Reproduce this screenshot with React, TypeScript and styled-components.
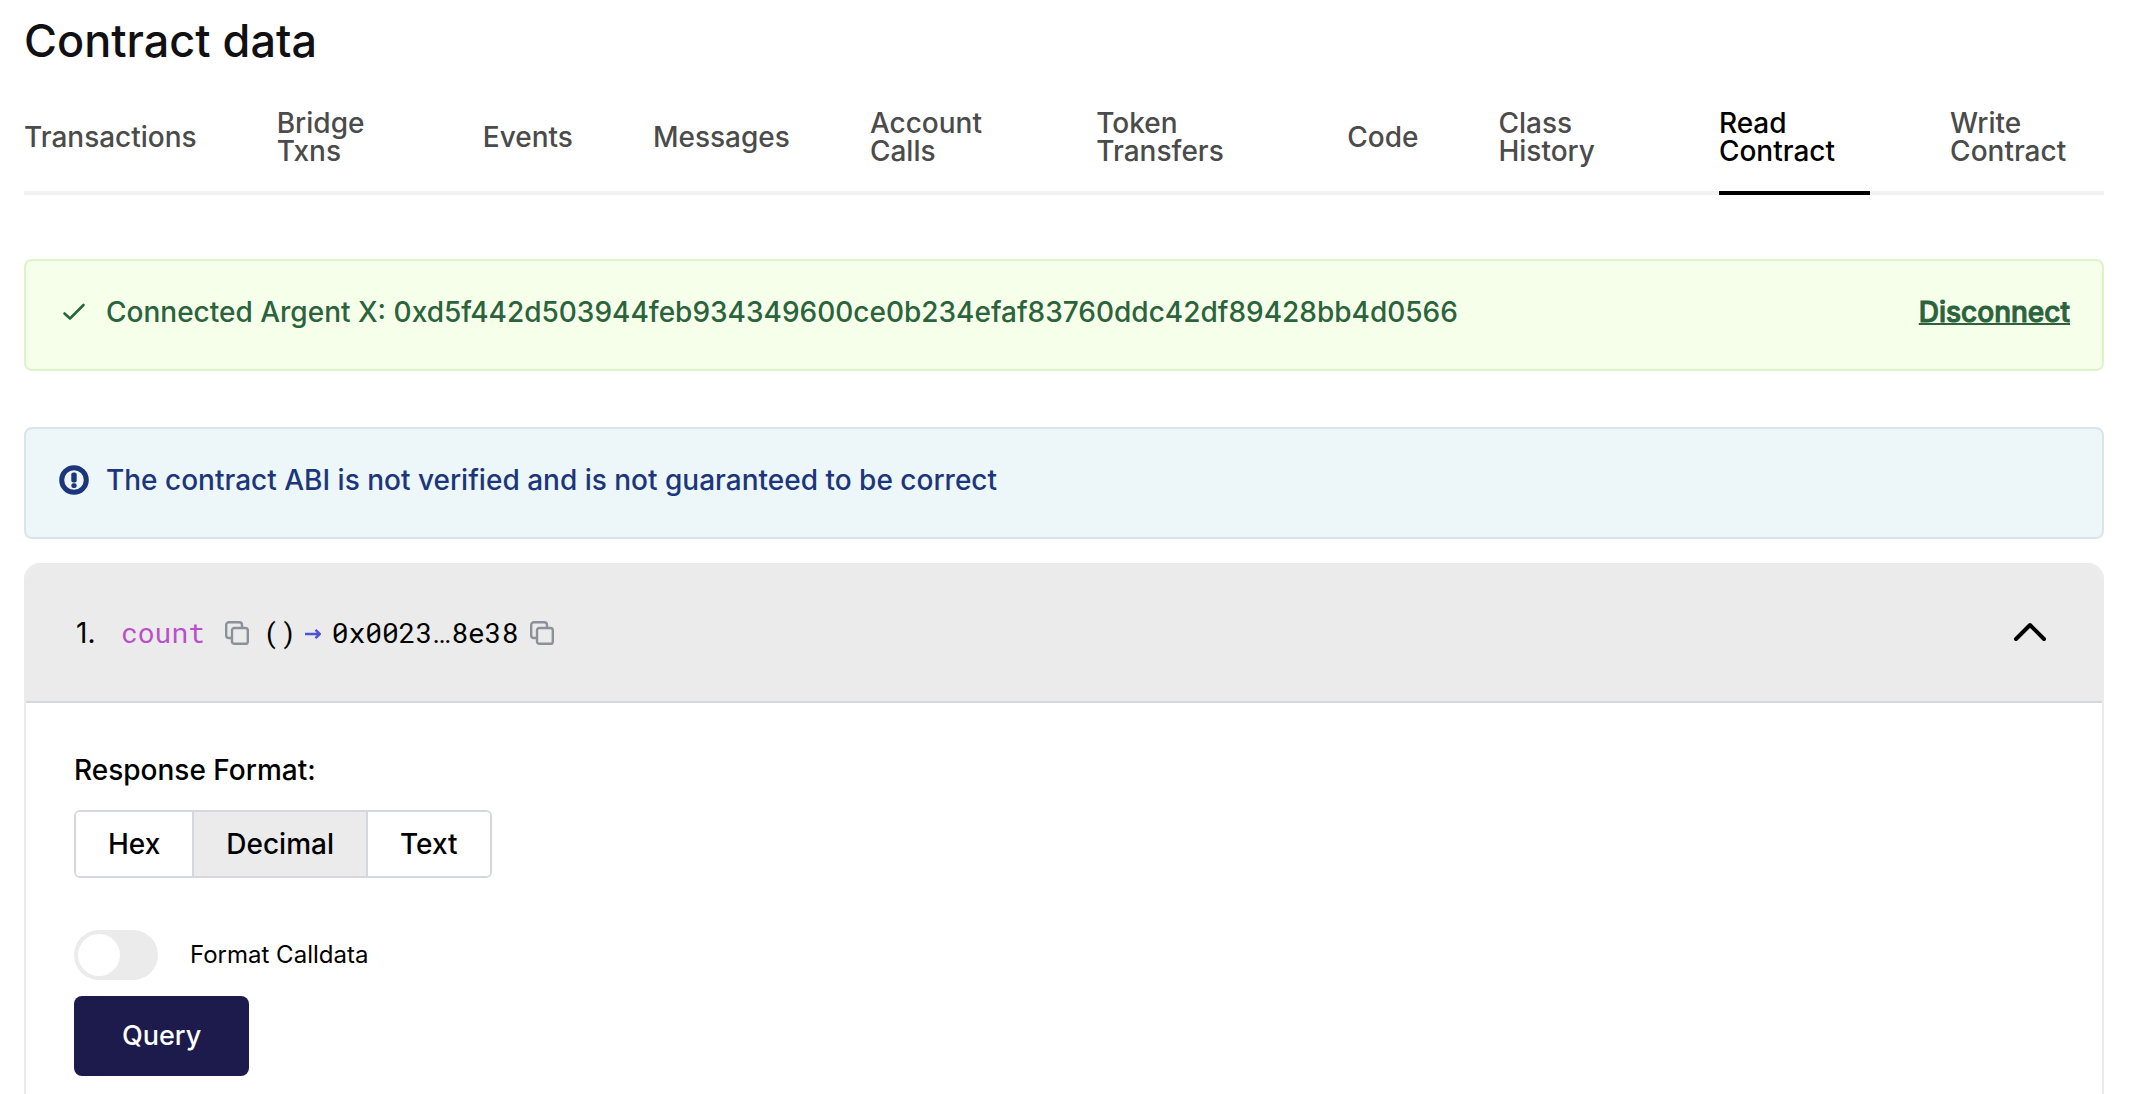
import React, { useState } from "react";
import styled, { createGlobalStyle } from "styled-components";

const GlobalStyle = createGlobalStyle`
  *, *::before, *::after { box-sizing: border-box; }
  body {
    margin: 0;
    background: #ffffff;
    color: #000000;
    font-family: Inter, "Liberation Sans", sans-serif;
    font-size: 28px;
    font-weight: 500;
    line-height: 40px;
  }
  button { font: inherit; color: inherit; cursor: pointer; }
`;

const Page = styled.main`
  display: flex;
  flex-direction: column;
  min-height: 100vh;
  padding: 16px 26px 0 24px;
`;

const Title = styled.h1`
  margin: 0;
  color: #111113;
  font-size: 45px;
  font-weight: 500;
  line-height: 50px;
`;

const Tabs = styled.div`
  display: flex;
  gap: 80px;
  margin-top: 43px;
  box-shadow: inset 0 -4px 0 #f2f2f2;
`;

const Tab = styled.button<{ $active: boolean }>`
  padding: 0 0 26px;
  border: 0;
  border-bottom: 4px solid ${(p) => (p.$active ? "#000000" : "transparent")};
  background: none;
  color: ${(p) => (p.$active ? "#000000" : "#4b4b4b")};
  line-height: 28px;
  text-align: left;
`;

const Notice = styled.section<{ $tone: "success" | "info" }>`
  display: flex;
  align-items: flex-start;
  gap: 16px;
  height: 112px;
  margin-top: ${(p) => (p.$tone === "success" ? "64px" : "56px")};
  padding: 32px;
  border: 2px solid ${(p) => (p.$tone === "success" ? "#dff3c8" : "#d9e6e8")};
  border-radius: 8px;
  background: ${(p) => (p.$tone === "success" ? "#f6ffe9" : "#edf6f8")};
  color: ${(p) => (p.$tone === "success" ? "#2a633c" : "#1b367c")};
  line-height: 38px;

  > svg { flex: none; margin-top: 4px; }
  p { flex: 1; margin: 0; }
`;

const Disconnect = styled.button`
  padding: 0;
  border: 0;
  background: none;
  text-decoration: underline;
  text-decoration-thickness: 2px;
  -webkit-text-stroke: 1px currentColor;
`;

const Panel = styled.section`
  flex: 1;
  margin-top: 24px;
  border: 2px solid #ebebeb;
  border-bottom: 0;
  border-radius: 16px 16px 0 0;
`;

const PanelHeader = styled.header`
  display: flex;
  align-items: center;
  justify-content: space-between;
  height: 138px;
  padding: 0 54px 0 50px;
  border-bottom: 2px solid #d4d8de;
  border-radius: 14px 14px 0 0;
  background: #ebebeb;
`;

const Signature = styled.div`
  display: flex;
  align-items: center;
  font-family: "Roboto Mono", "DejaVu Sans Mono", monospace;
  font-weight: 400;
`;

const Index = styled.span`
  width: 45px;
  font-family: Inter, sans-serif;
`;

const FunctionName = styled.span`
  margin-right: 20px;
  color: #b94fc9;
`;

const Params = styled.span`
  margin: 0 8px 0 14px;
`;

const Arrow = styled.span`
  display: flex;
  margin-right: 11px;
`;

const Value = styled.span`
  margin-right: 12px;
`;

const Ellipsis = styled.span`
  font-family: Roboto, sans-serif;
`;

const IconButton = styled.button`
  display: flex;
  padding: 0;
  border: 0;
  background: none;
`;

const PanelBody = styled.div`
  display: flex;
  flex-direction: column;
  align-items: flex-start;
  padding: 47px 48px 18px;
`;

const Segments = styled.div`
  display: flex;
  margin-top: 20px;
  border: 2px solid #d4d8de;
  border-radius: 6px;
  overflow: hidden;
`;

const Segment = styled.button<{ $active: boolean }>`
  padding: 12px 32px;
  border: 0;
  background: ${(p) => (p.$active ? "#ebebeb" : "#ffffff")};

  & + & { border-left: 2px solid #d4d8de; }
`;

const SwitchRow = styled.label`
  display: flex;
  align-items: center;
  gap: 32px;
  margin-top: 52px;
  font-size: 24px;
  font-weight: 400;
  cursor: pointer;
`;

const Switch = styled.input`
  appearance: none;
  display: flex;
  width: 84px;
  height: 50px;
  margin: 0;
  padding: 4px;
  border-radius: 25px;
  background: #ebebeb;
  cursor: pointer;

  &::before {
    content: "";
    width: 42px;
    height: 42px;
    border-radius: 50%;
    background: #ffffff;
  }
  &:checked { justify-content: flex-end; background: #1c1b4b; }
`;

const QueryButton = styled.button`
  height: 80px;
  margin-top: 16px;
  padding: 0 48px;
  border: 0;
  border-radius: 8px;
  background: #1c1b4b;
  color: #ffffff;
  font-size: 27px;
`;

const CheckIcon = () => (
  <svg width="32" height="30" viewBox="0 0 32 30" fill="none" aria-hidden="true">
    <path d="M6.500 16.500L12 21.500L25.500 8" stroke="currentColor" strokeWidth="2.600" strokeLinecap="round" strokeLinejoin="round" />
  </svg>
);

const AlertIcon = () => (
  <svg width="32" height="30" viewBox="0 0 32 30" fill="none" aria-hidden="true">
    <circle cx="16" cy="15" r="12.300" stroke="currentColor" strokeWidth="5" />
    <rect x="13.300" y="7.500" width="5.400" height="10" rx="2" fill="currentColor" />
    <rect x="13.300" y="18.300" width="5.400" height="4.700" rx="2.200" fill="currentColor" />
  </svg>
);

const CopyIcon = () => (
  <svg width="24" height="24" viewBox="0 0 24 24" fill="none" stroke="#8c9099" strokeWidth="2.400" aria-hidden="true">
    <rect x="7" y="7" width="15.800" height="15.800" rx="2.400" />
    <path d="M7 17H4a2.800 2.800 0 0 1-2.800-2.800V4A2.800 2.800 0 0 1 4 1.200h10.200A2.800 2.800 0 0 1 17 4v3" />
  </svg>
);

const ArrowIcon = () => (
  <svg width="16" height="12" viewBox="0 0 16 12" fill="none" stroke="#5151d6" strokeWidth="2.400" aria-hidden="true">
    <path d="M0 7H14.500M10.500 2.800L14.700 7L10.500 11.200" />
  </svg>
);

const ChevronIcon = () => (
  <svg width="36" height="24" viewBox="0 0 36 24" fill="none" aria-hidden="true">
    <path d="M4 18L18 4L32 18" stroke="#000000" strokeWidth="4" strokeLinecap="round" strokeLinejoin="round" />
  </svg>
);

const tabNames = [
  "Transactions", "Bridge Txns", "Events", "Messages", "Account Calls",
  "Token Transfers", "Code", "Class History", "Read Contract", "Write Contract",
];
const formats = ["Hex", "Decimal", "Text"];

export default function App() {
  const [tab, setTab] = useState("Read Contract");
  const [format, setFormat] = useState("Decimal");
  const [open, setOpen] = useState(true);

  return (
    <>
      <GlobalStyle />
      <Page>
        <Title>Contract data</Title>
        <Tabs role="tablist">
          {tabNames.map((name) => (
            <Tab key={name} role="tab" aria-selected={name === tab} $active={name === tab} onClick={() => setTab(name)}>
              {name}
            </Tab>
          ))}
        </Tabs>
        <Notice $tone="success">
          <CheckIcon />
          <p>Connected Argent X: 0xd5f442d503944feb934349600ce0b234efaf83760ddc42df89428bb4d0566</p>
          <Disconnect>Disconnect</Disconnect>
        </Notice>
        <Notice $tone="info">
          <AlertIcon />
          <p>The contract ABI is not verified and is not guaranteed to be correct</p>
        </Notice>
        <Panel>
          <PanelHeader>
            <Signature>
              <Index>1.</Index>
              <FunctionName>count</FunctionName>
              <IconButton aria-label="Copy function name"><CopyIcon /></IconButton>
              <Params>()</Params>
              <Arrow><ArrowIcon /></Arrow>
              <Value>0x0023<Ellipsis>…</Ellipsis>8e38</Value>
              <IconButton aria-label="Copy type"><CopyIcon /></IconButton>
            </Signature>
            <IconButton aria-label="Toggle function" aria-expanded={open} onClick={() => setOpen(!open)}>
              <ChevronIcon />
            </IconButton>
          </PanelHeader>
          {open && (
            <PanelBody>
              <span id="response-format">Response Format:</span>
              <Segments role="group" aria-labelledby="response-format">
                {formats.map((name) => (
                  <Segment key={name} aria-pressed={name === format} $active={name === format} onClick={() => setFormat(name)}>
                    {name}
                  </Segment>
                ))}
              </Segments>
              <SwitchRow>
                <Switch type="checkbox" role="switch" />
                Format Calldata
              </SwitchRow>
              <QueryButton>Query</QueryButton>
            </PanelBody>
          )}
        </Panel>
      </Page>
    </>
  );
}
